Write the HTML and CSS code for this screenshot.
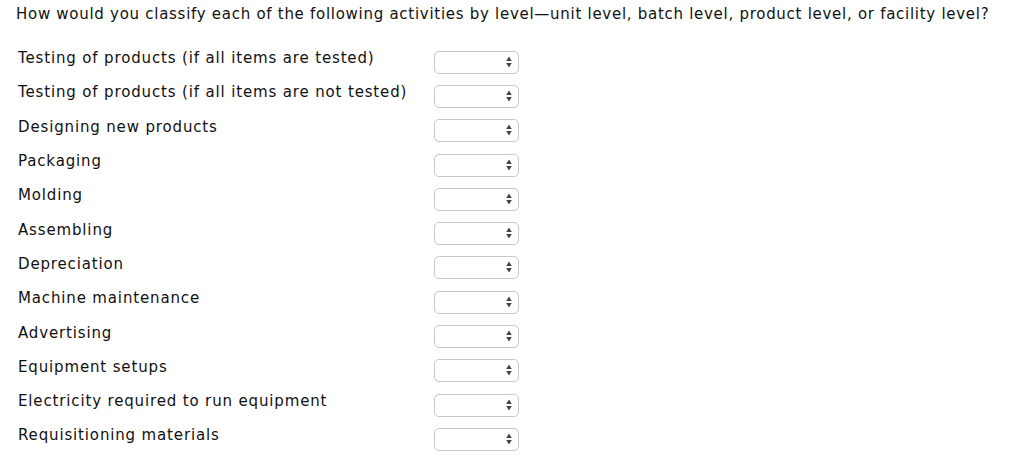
FILE: index.html
```
<!DOCTYPE html>
<html>
<head>
<meta charset="utf-8">
<link rel="stylesheet" href="styles.css">
</head>
<body>
<div class="page">
  <p class="question">How would you classify each of the following activities by level—unit level, batch level, product level, or facility level?</p>
  <div class="rows">
    <div class="row"><span class="label">Testing of products (if all items are tested)</span><span class="sel"><select></select><svg class="arr" width="6" height="12" viewBox="0 0 6 12"><path d="M3 0.5 L5.8 5 L0.2 5 Z M3 11.5 L5.8 7 L0.2 7 Z" fill="#444"/></svg></span></div>
    <div class="row"><span class="label">Testing of products (if all items are not tested)</span><span class="sel"><select></select><svg class="arr" width="6" height="12" viewBox="0 0 6 12"><path d="M3 0.5 L5.8 5 L0.2 5 Z M3 11.5 L5.8 7 L0.2 7 Z" fill="#444"/></svg></span></div>
    <div class="row"><span class="label">Designing new products</span><span class="sel"><select></select><svg class="arr" width="6" height="12" viewBox="0 0 6 12"><path d="M3 0.5 L5.8 5 L0.2 5 Z M3 11.5 L5.8 7 L0.2 7 Z" fill="#444"/></svg></span></div>
    <div class="row"><span class="label">Packaging</span><span class="sel"><select></select><svg class="arr" width="6" height="12" viewBox="0 0 6 12"><path d="M3 0.5 L5.8 5 L0.2 5 Z M3 11.5 L5.8 7 L0.2 7 Z" fill="#444"/></svg></span></div>
    <div class="row"><span class="label">Molding</span><span class="sel"><select></select><svg class="arr" width="6" height="12" viewBox="0 0 6 12"><path d="M3 0.5 L5.8 5 L0.2 5 Z M3 11.5 L5.8 7 L0.2 7 Z" fill="#444"/></svg></span></div>
    <div class="row"><span class="label">Assembling</span><span class="sel"><select></select><svg class="arr" width="6" height="12" viewBox="0 0 6 12"><path d="M3 0.5 L5.8 5 L0.2 5 Z M3 11.5 L5.8 7 L0.2 7 Z" fill="#444"/></svg></span></div>
    <div class="row"><span class="label">Depreciation</span><span class="sel"><select></select><svg class="arr" width="6" height="12" viewBox="0 0 6 12"><path d="M3 0.5 L5.8 5 L0.2 5 Z M3 11.5 L5.8 7 L0.2 7 Z" fill="#444"/></svg></span></div>
    <div class="row"><span class="label">Machine maintenance</span><span class="sel"><select></select><svg class="arr" width="6" height="12" viewBox="0 0 6 12"><path d="M3 0.5 L5.8 5 L0.2 5 Z M3 11.5 L5.8 7 L0.2 7 Z" fill="#444"/></svg></span></div>
    <div class="row"><span class="label">Advertising</span><span class="sel"><select></select><svg class="arr" width="6" height="12" viewBox="0 0 6 12"><path d="M3 0.5 L5.8 5 L0.2 5 Z M3 11.5 L5.8 7 L0.2 7 Z" fill="#444"/></svg></span></div>
    <div class="row"><span class="label">Equipment setups</span><span class="sel"><select></select><svg class="arr" width="6" height="12" viewBox="0 0 6 12"><path d="M3 0.5 L5.8 5 L0.2 5 Z M3 11.5 L5.8 7 L0.2 7 Z" fill="#444"/></svg></span></div>
    <div class="row"><span class="label">Electricity required to run equipment</span><span class="sel"><select></select><svg class="arr" width="6" height="12" viewBox="0 0 6 12"><path d="M3 0.5 L5.8 5 L0.2 5 Z M3 11.5 L5.8 7 L0.2 7 Z" fill="#444"/></svg></span></div>
    <div class="row"><span class="label">Requisitioning materials</span><span class="sel"><select></select><svg class="arr" width="6" height="12" viewBox="0 0 6 12"><path d="M3 0.5 L5.8 5 L0.2 5 Z M3 11.5 L5.8 7 L0.2 7 Z" fill="#444"/></svg></span></div>
  </div>
</div>
</body>
</html>
```
FILE: styles.css
```
html, body {
  margin: 0;
  padding: 0;
  background: #fff;
}
.page {
  font-family: "DejaVu Sans", Verdana, sans-serif;
  font-size: 15px;
  color: #111;
  padding: 5px 0 0 16px;
}
.question {
  margin: 0;
  line-height: 18px;
  letter-spacing: 0.72px;
  white-space: nowrap;
}
.rows {
  display: flex;
  flex-direction: column;
  margin-top: 22px;
  padding-left: 2px;
}
.row {
  display: grid;
  grid-template-columns: 416px 85px;
  align-items: center;
  height: 34.3px;
}
.label {
  line-height: 18px;
  letter-spacing: 0.85px;
  position: relative;
  top: -4px;
  white-space: nowrap;
}
.sel {
  position: relative;
  width: 85px;
  height: 23px;
}
.sel select {
  -webkit-appearance: none;
  appearance: none;
  width: 85px;
  height: 23px;
  border: 1px solid #c8c8c8;
  border-radius: 5px;
  background: #fff;
  margin: 0;
  padding: 0;
  box-sizing: border-box;
}
.arr {
  position: absolute;
  right: 7px;
  top: 5px;
}
```
